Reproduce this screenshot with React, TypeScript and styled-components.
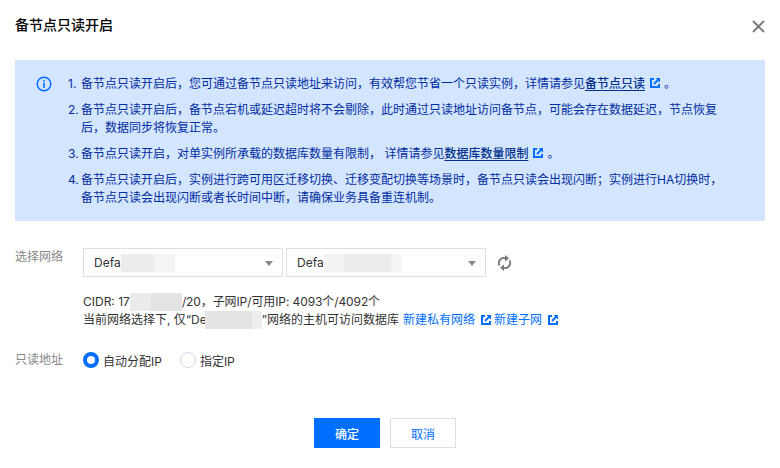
import React from 'react';
import styled, { createGlobalStyle } from 'styled-components';

const GlobalStyle = createGlobalStyle`
    html, body {
        margin: 0;
        padding: 0;
        background: #fff;
    }
    body {
        font-family: Inter, "Noto Sans CJK SC", sans-serif;
        font-size: 12px;
        color: #333;
    }
`;

const Dialog = styled.div`
    width: 780px;
    height: 468px;
    box-sizing: border-box;
    padding: 0 15px;
    display: flex;
    flex-direction: column;
    overflow: hidden;
`;

const Header = styled.div`
    height: 60px;
    display: flex;
    justify-content: space-between;
    align-items: flex-start;
`;

const Title = styled.h3`
    margin: 15px 0 0;
    font-size: 14px;
    line-height: 20px;
    font-weight: 500;
    color: #000;
`;

const CloseButton = styled.button`
    margin: 20px 0 0;
    padding: 0;
    border: 0;
    width: 13px;
    height: 13px;
    background: transparent;
    color: #777;
    display: flex;
`;

const Notice = styled.div`
    height: 161px;
    box-sizing: border-box;
    background: #d4e5ff;
    padding: 15px 20px 0 21px;
    display: flex;
    gap: 16px;
`;

const NoticeIcon = styled.span`
    flex: none;
    width: 16px;
    height: 16px;
    margin-top: 1px;
    color: #006eff;
    display: flex;
`;

const NoticeList = styled.ol`
    margin: 0;
    padding: 0;
    list-style: none;
    display: flex;
    flex-direction: column;
    gap: 8px;
    color: #002da0;
    line-height: 18px;
`;

const NoticeItem = styled.li`
    display: flex;
`;

const ItemNumber = styled.span`
    flex: none;
    width: 13px;
`;

const DocLink = styled.a`
    color: #00308c;
    font-weight: 500;
    text-decoration: underline;
    text-underline-offset: 2px;
`;

const LinkIcon = styled.span<{ $tight?: boolean }>`
    display: inline-flex;
    vertical-align: -1px;
    margin: 0 ${(p) => (p.$tight ? '-2px' : '3px')} 0 ${(p) => (p.$tight ? '5px' : '4px')};
    color: #006eff;
`;

const FormArea = styled.div`
    margin-top: 27px;
    display: flex;
    flex-direction: column;
`;

const FormRow = styled.div`
    display: flex;
`;

const RadioRow = styled(FormRow)`
    margin-top: 22px;
    align-items: center;
`;

const Label = styled.div`
    flex: none;
    width: 68px;
    color: #888;
    line-height: 18px;
`;

const Fields = styled.div`
    display: flex;
    flex-direction: column;
`;

const SelectRow = styled.div`
    display: flex;
    align-items: center;
    gap: 3px;
`;

const Select = styled.div`
    position: relative;
    width: 200px;
    height: 29px;
    box-sizing: border-box;
    border: 1px solid #dcdfe9;
    padding-left: 10px;
    display: flex;
    align-items: center;
    color: #333;
`;

const Caret = styled.span`
    position: absolute;
    right: 9px;
    top: 12px;
    width: 0;
    height: 0;
    border-left: 4px solid transparent;
    border-right: 4px solid transparent;
    border-top: 5px solid #888;
`;

const Mask = styled.span<{ $w: number; $tone: string; $lap?: number }>`
    display: inline-block;
    width: ${(p) => p.$w}px;
    height: 18px;
    margin-left: ${(p) => (p.$lap ? -p.$lap : 0)}px;
    background: ${(p) => p.$tone};
    flex: none;
`;

const RefreshButton = styled.span`
    margin-left: 9px;
    width: 13px;
    height: 16px;
    color: #777;
    display: flex;
`;

const InfoBlock = styled.div`
    margin-top: 16px;
    line-height: 18px;
    color: #333;
    white-space: nowrap;
`;

const MaskedLine = styled.div`
    display: flex;
    align-items: center;
    height: 18px;
`;

const SubnetText = styled.span`
    letter-spacing: -0.1px;
`;

const BlueLink = styled.a`
    color: #006eff;
    margin-left: 4px;
`;

const RadioGroup = styled.div`
    display: flex;
    align-items: center;
    gap: 18px;
`;

const RadioOption = styled.label`
    display: flex;
    align-items: center;
    gap: 4px;
    color: #333;
`;

const RadioDot = styled.span<{ $on?: boolean }>`
    width: 16px;
    height: 16px;
    box-sizing: border-box;
    border-radius: 50%;
    background: #fff;
    border: ${(p) => (p.$on ? '4px solid #006eff' : '1px solid #d5d9e6')};
`;

const Footer = styled.div`
    margin-top: 49px;
    padding-right: 10px;
    display: flex;
    justify-content: center;
    gap: 10px;
`;

const Button = styled.button<{ $primary?: boolean }>`
    width: 66px;
    height: 30px;
    padding: 0;
    font: inherit;
    font-weight: ${(p) => (p.$primary ? 500 : 400)};
    border: 1px solid ${(p) => (p.$primary ? '#006eff' : '#dcdfe9')};
    background: ${(p) => (p.$primary ? '#006eff' : '#fff')};
    color: ${(p) => (p.$primary ? '#fff' : '#006eff')};
`;

const ExternalIcon = () => (
    <svg width='12' height='12' viewBox='0 0 12 12' fill='none' stroke='currentColor' strokeWidth='2'>
        <path d='M5 2H2v8h8V7' />
        <path d='M6.500 1h4.500v4.500' fill='currentColor' stroke='none' />
        <path d='M5 7l4.600-4.600' />
    </svg>
);

const App = () => (
    <>
        <GlobalStyle />
        <Dialog>
            <Header>
                <Title>备节点只读开启</Title>
                <CloseButton aria-label='关闭'>
                    <svg width='13' height='13' viewBox='0 0 13 13' stroke='currentColor' strokeWidth='1.8'>
                        <path d='M1 1l11 11M12 1L1 12' />
                    </svg>
                </CloseButton>
            </Header>
            <Notice>
                <NoticeIcon>
                    <svg width='16' height='16' viewBox='0 0 16 16' fill='none'>
                        <circle cx='8' cy='8' r='6.800' stroke='currentColor' strokeWidth='1.500' />
                        <rect x='7.200' y='3.800' width='1.600' height='1.700' fill='currentColor' />
                        <rect x='7.200' y='6.600' width='1.600' height='5.400' fill='currentColor' />
                    </svg>
                </NoticeIcon>
                <NoticeList>
                    <NoticeItem>
                        <ItemNumber>1.</ItemNumber>
                        <span>
                            备节点只读开启后，您可通过备节点只读地址来访问，有效帮您节省一个只读实例，详情请参见<DocLink>备节点只读</DocLink>
                            <LinkIcon><ExternalIcon /></LinkIcon>。
                        </span>
                    </NoticeItem>
                    <NoticeItem>
                        <ItemNumber>2.</ItemNumber>
                        <span>
                            备节点只读开启后，备节点宕机或延迟超时将不会剔除，此时通过只读地址访问备节点，可能会存在数据延迟，节点恢复
                            <br />
                            后，数据同步将恢复正常。
                        </span>
                    </NoticeItem>
                    <NoticeItem>
                        <ItemNumber>3.</ItemNumber>
                        <span>
                            备节点只读开启，对单实例所承载的数据库数量有限制， 详情请参见<DocLink>数据库数量限制</DocLink>
                            <LinkIcon><ExternalIcon /></LinkIcon>。
                        </span>
                    </NoticeItem>
                    <NoticeItem>
                        <ItemNumber>4.</ItemNumber>
                        <span>
                            备节点只读开启后，实例进行跨可用区迁移切换、迁移变配切换等场景时，备节点只读会出现闪断；实例进行HA切换时，
                            <br />
                            备节点只读会出现闪断或者长时间中断，请确保业务具备重连机制。
                        </span>
                    </NoticeItem>
                </NoticeList>
            </Notice>
            <FormArea>
                <FormRow>
                    <Label>选择网络</Label>
                    <Fields>
                        <SelectRow>
                            <Select>
                                Defa
                                <Mask $w={33} $tone='#ececec' />
                                <Mask $w={21} $tone='#f4f4f4' />
                                <Caret />
                            </Select>
                            <Select>
                                Defa
                                <Mask $w={20} $tone='#f3f3f3' />
                                <Mask $w={47} $tone='#ececec' />
                                <Mask $w={11} $tone='#f5f5f5' />
                                <Caret />
                            </Select>
                            <RefreshButton>
                                <svg width='13' height='16' viewBox='0 0 13 16' fill='none' stroke='currentColor' strokeWidth='1.800'>
                                    <path d='M1.500 10.500A5 5 0 0 1 7.500 3.300' />
                                    <path d='M11.500 5.500A5 5 0 0 1 5.500 12.700' />
                                    <path d='M7 0l4 3.200L7 6.400z' fill='currentColor' stroke='none' />
                                    <path d='M6 9.600L2 12.800L6 16z' fill='currentColor' stroke='none' />
                                </svg>
                            </RefreshButton>
                        </SelectRow>
                        <InfoBlock>
                            <MaskedLine>
                                CIDR: 17
                                <Mask $w={21} $tone='#ebebeb' />
                                <Mask $w={31} $tone='#e4e4e4' />
                                <SubnetText>/20，子网IP/可用IP: 4093个/4092个</SubnetText>
                            </MaskedLine>
                            <MaskedLine>
                                当前网络选择下, 仅“De
                                <Mask $w={47} $tone='#e4e4e4' $lap={2} />
                                <Mask $w={10} $tone='#eeeeee' />
                                ”网络的主机可访问数据库
                                <BlueLink>新建私有网络</BlueLink>
                                <LinkIcon $tight><ExternalIcon /></LinkIcon>
                                <BlueLink>新建子网</BlueLink>
                                <LinkIcon $tight><ExternalIcon /></LinkIcon>
                            </MaskedLine>
                        </InfoBlock>
                    </Fields>
                </FormRow>
                <RadioRow>
                    <Label>只读地址</Label>
                    <RadioGroup>
                        <RadioOption><RadioDot $on />自动分配IP</RadioOption>
                        <RadioOption><RadioDot />指定IP</RadioOption>
                    </RadioGroup>
                </RadioRow>
            </FormArea>
            <Footer>
                <Button $primary>确定</Button>
                <Button>取消</Button>
            </Footer>
        </Dialog>
    </>
);

export default App;
